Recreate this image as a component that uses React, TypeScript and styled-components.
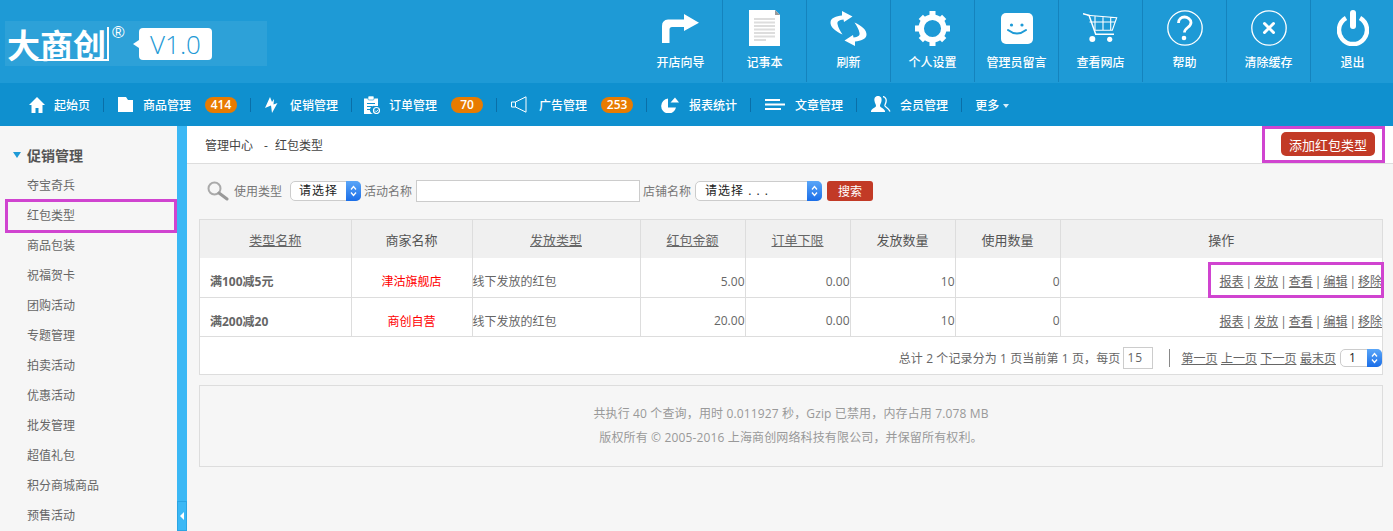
import { ReactNode } from 'react';
import styled, { createGlobalStyle } from 'styled-components';

const GlobalStyle = createGlobalStyle`
  html, body {
    margin: 0;
    height: 100%;
    overflow: hidden;
    background: #f6f6f6;
    font-family: "Open Sans", "Noto Sans CJK SC", "Liberation Sans", sans-serif;
    font-size: 12px;
  }
`;

const MARK = '#d044d0';

const refreshArc = 'M12.5 23.500C5 20 0 16 .5 11 1 7 6 5 12 4.500L12 0l10.500 5.500L14 11l-.5-2.500C9 9 7 10.500 7.500 13c.5 3 2.500 7 5 10.500z';

const toolIcons: Record<string, ReactNode> = {
  guide: (
    <svg width="37" height="29" viewBox="0 0 37 29">
      <path d="M0 29V12Q0 6 6 5.500H22V0L37 8.700 22 17V13H10Q7.500 13 7.500 15.500V29z" fill="#fff" />
    </svg>
  ),
  note: (
    <svg width="31" height="36" viewBox="0 0 31 36">
      <path d="M0 0h26l5 5v31H0z" fill="#fff" />
      <path d="M26 0l5 5h-5z" fill="#999" />
      <path d="M5 9h21M5 12.500h21M5 16h21M5 19.500h21M5 23h21M5 26.500h21" stroke="#ddd" strokeWidth="2" />
      <path d="M5 30h12" stroke="#ddd" strokeWidth="2" />
    </svg>
  ),
  refresh: (
    <svg width="37" height="35" viewBox="0 0 37 35">
      <path d={refreshArc} fill="#fff" />
      <path d={refreshArc} fill="#fff" transform="rotate(180 18.500 17.500)" />
    </svg>
  ),
  gear: (
    <svg width="35" height="35" viewBox="0 0 35 35">
      <circle cx="17.500" cy="17.500" r="11.300" fill="none" stroke="#fff" strokeWidth="5.500" />
      <g fill="#fff">
        <rect x="14.500" y="0" width="6" height="7" />
        <rect x="14.500" y="28" width="6" height="7" />
        <rect x="0" y="14.500" width="7" height="6" />
        <rect x="28" y="14.500" width="7" height="6" />
        <rect x="14.500" y="1" width="6" height="7" transform="rotate(45 17.500 17.500)" />
        <rect x="14.500" y="1" width="6" height="7" transform="rotate(135 17.500 17.500)" />
        <rect x="14.500" y="1" width="6" height="7" transform="rotate(225 17.500 17.500)" />
        <rect x="14.500" y="1" width="6" height="7" transform="rotate(315 17.500 17.500)" />
      </g>
    </svg>
  ),
  message: (
    <svg width="32" height="31" viewBox="0 0 32 31">
      <rect width="32" height="31" rx="5" fill="#fff" />
      <circle cx="10.500" cy="12" r="1.600" fill="#1e9ad6" />
      <circle cx="21" cy="12" r="1.600" fill="#1e9ad6" />
      <path d="M7 17Q16 24 25 17" fill="none" stroke="#1e9ad6" strokeWidth="2" strokeLinecap="round" />
    </svg>
  ),
  cart: (
    <svg width="35" height="30" viewBox="0 0 35 30" fill="none" stroke="#fff">
      <path d="M0 .7l6 1.600 6.700 19H31" strokeWidth="1.500" />
      <path d="M4.300 2.300l29.400 2.400-4.400 12.600H11M12 3v14M20 3.500v14M27.700 4v13M6.500 9h25.500" strokeWidth="1.100" />
      <circle cx="9.300" cy="26" r="3" fill="#fff" stroke="none" />
      <circle cx="26.700" cy="26.300" r="2.600" fill="#fff" stroke="none" />
    </svg>
  ),
  help: (
    <svg width="36" height="36" viewBox="0 0 36 36" fill="none" stroke="#fff">
      <circle cx="18" cy="18" r="17.200" strokeWidth="1.300" />
      <path d="M11.500 13c0-4 3-6 6-6s6.500 2.500 6.500 5.500c0 5-6.500 5-6.500 10" strokeWidth="2.800" />
      <circle cx="17" cy="28" r="2.300" fill="#fff" stroke="none" />
    </svg>
  ),
  clear: (
    <svg width="36" height="36" viewBox="0 0 36 36" fill="none" stroke="#fff">
      <circle cx="18" cy="18" r="17.200" strokeWidth="1.300" />
      <path d="M13.500 13.500l9 9M22.500 13.500l-9 9" strokeWidth="3" strokeLinecap="round" />
    </svg>
  ),
  power: (
    <svg width="32" height="36" viewBox="0 0 32 36" fill="none" stroke="#fff">
      <path d="M9 8a14 14 0 1 0 14 0" strokeWidth="4.500" />
      <path d="M16 3v13" strokeWidth="6" strokeLinecap="round" />
    </svg>
  ),
};

const tools = [
  { key: 'guide', label: '开店向导' },
  { key: 'note', label: '记事本' },
  { key: 'refresh', label: '刷新' },
  { key: 'gear', label: '个人设置' },
  { key: 'message', label: '管理员留言' },
  { key: 'cart', label: '查看网店' },
  { key: 'help', label: '帮助' },
  { key: 'clear', label: '清除缓存' },
  { key: 'power', label: '退出' },
];

const navIcons: Record<string, ReactNode> = {
  home: (
    <svg width="16" height="16" viewBox="0 0 16 16">
      <path d="M8 0l8 8h-2.500v8H9.500v-5h-3v5h-4V8H0z" fill="#fff" />
    </svg>
  ),
  folder: (
    <svg width="15" height="15" viewBox="0 0 15 15">
      <path d="M0 0h8l2 3h5v12H0z" fill="#fff" />
    </svg>
  ),
  bolt: (
    <svg width="13" height="16" viewBox="0 0 13 16">
      <path d="M5 0L0 11l6-2.500L7 16l5.500-10-4 1.500L9 2 7 5z" fill="#fff" />
    </svg>
  ),
  order: (
    <svg width="16" height="18" viewBox="0 0 16 18">
      <path d="M0 2.500h14V10h-3a4 4 0 0 0-2 8H0z" fill="#fff" />
      <rect x="4" y="0" width="6" height="4" rx="1" fill="#fff" stroke="#0f90cf" strokeWidth=".6" />
      <path d="M3 7.500h8M3 10.500h5M3 13.500h4" stroke="#0f90cf" strokeWidth="1.200" />
      <circle cx="12.500" cy="14.500" r="3" fill="none" stroke="#fff" strokeWidth="1.200" />
      <path d="M11 14.500l1.200 1.200 2-2" fill="none" stroke="#fff" strokeWidth="1" />
    </svg>
  ),
  ad: (
    <svg width="16" height="17" viewBox="0 0 16 17" fill="none" stroke="#fff">
      <path d="M.5 6h4L15 .8v15.400L4.500 11h-4zM4.500 6v5" strokeWidth="1" />
    </svg>
  ),
  chart: (
    <svg width="20" height="16" viewBox="0 0 20 16">
      <path d="M9 1.500a7.500 7.500 0 1 0 8 9H9z" fill="#fff" />
      <path d="M11.500 5.500L16 .5l4 5z" fill="#fff" />
    </svg>
  ),
  article: (
    <svg width="20" height="12" viewBox="0 0 20 12">
      <path d="M0 1h15M0 5.500h20M0 10h16" stroke="#fff" strokeWidth="1.800" />
    </svg>
  ),
  member: (
    <svg width="20" height="17" viewBox="0 0 20 17">
      <path d="M7 0c3 0 4 2.500 3.500 5-.3 2-1.500 3.500-1.500 5 0 1.500 4 2 5 5v1H0v-1c1-3 5-3.500 5-5 0-1.500-1.200-3-1.500-5C3 2.500 4 0 7 0z" fill="#fff" />
      <path d="M12 .5c3 .5 3.500 3.500 3 5.500-.3 1.500-1.500 3-1 4 1 1.500 3.500 2 5 5.500" fill="none" stroke="#fff" strokeWidth="1.300" />
    </svg>
  ),
};

const navItems = [
  { key: 'home', label: '起始页', width: 15 },
  { key: 'folder', label: '商品管理', width: 15, count: 414 },
  { key: 'bolt', label: '促销管理', width: 15 },
  { key: 'order', label: '订单管理', width: 13, count: 70, shift: -2 },
  { key: 'ad', label: '广告管理', width: 18, count: 253 },
  { key: 'chart', label: '报表统计', width: 18, shift: -2 },
  { key: 'article', label: '文章管理', width: 20 },
  { key: 'member', label: '会员管理', width: 19 },
];

const sideItems = [
  '夺宝奇兵', '红包类型', '商品包装', '祝福贺卡', '团购活动', '专题管理',
  '拍卖活动', '优惠活动', '批发管理', '超值礼包', '积分商城商品', '预售活动',
];

const rows = [
  { name: '满100减5元', shop: '津沽旗舰店', kind: '线下发放的红包', money: '5.00', marked: true },
  { name: '满200减20', shop: '商创自营', kind: '线下发放的红包', money: '20.00', marked: false },
];

const actions = ['报表', '发放', '查看', '编辑', '移除'];

const Stepper = () => (
  <StepperBox>
    <svg width="7" height="12" viewBox="0 0 7 12" fill="none" stroke="#fff" strokeWidth="1.300">
      <path d="M1 4.500l2.500-3 2.500 3M1 7.500l2.500 3 2.500-3" />
    </svg>
  </StepperBox>
);

const App = () => (
  <Page>
    <GlobalStyle />
    <TopBar>
      <LogoArea>
        <LogoText>
          大商创
          <LogoFrame />
        </LogoText>
        <Registered>®</Registered>
        <VersionBubble>V1.0</VersionBubble>
      </LogoArea>
      <ToolList>
        {tools.map((tool, i) => (
          <Tool key={tool.key} $first={i === 0}>
            <ToolIcon>{toolIcons[tool.key]}</ToolIcon>
            <span>{tool.label}</span>
          </Tool>
        ))}
      </ToolList>
    </TopBar>

    <NavBar>
      {navItems.map(item => (
        <NavItem key={item.key}>
          <NavIcon $width={item.width} $shift={item.shift || 0}>
            {navIcons[item.key]}
          </NavIcon>
          <span>{item.label}</span>
          {item.count && <Badge>{item.count}</Badge>}
        </NavItem>
      ))}
      <MoreItem>
        更多
        <Caret />
      </MoreItem>
    </NavBar>

    <Body>
      <Sidebar>
        <SideHeading>
          <HeadingArrow />
          促销管理
        </SideHeading>
        {sideItems.map(label => (
          <SideItem key={label} $marked={label === '红包类型'}>
            {label}
          </SideItem>
        ))}
      </Sidebar>
      <Divider>
        <CollapseButton />
      </Divider>

      <Main>
        <Breadcrumb>
          <Trail>
            管理中心<TrailDash>-</TrailDash>红包类型
          </Trail>
          <AddButton>添加红包类型</AddButton>
        </Breadcrumb>

        <Content>
          <SearchRow>
            <SearchIcon width="22" height="20" viewBox="0 0 22 20" fill="none">
              <circle cx="7.500" cy="7.500" r="6" stroke="#aaa" strokeWidth="2" />
              <path d="M12 12l8 6" stroke="#999" strokeWidth="3" strokeLinecap="round" />
            </SearchIcon>
            <SearchLabel>使用类型</SearchLabel>
            <FakeSelect $width={71} $left={8} $before={8} $after={3}>
              请选择
              <Stepper />
            </FakeSelect>
            <SearchLabel>活动名称</SearchLabel>
            <SearchInput />
            <SearchLabel>店铺名称</SearchLabel>
            <FakeSelect $width={127} $left={9} $before={4} $after={3}>
              请选择 . . .
              <Stepper />
            </FakeSelect>
            <SearchButton>搜索</SearchButton>
          </SearchRow>

          <Panel>
            <Table>
              <colgroup>
                <col width="151" />
                <col width="121" />
                <col width="168" />
                <col width="105" />
                <col width="105" />
                <col width="105" />
                <col width="105" />
                <col />
              </colgroup>
              <thead>
                <tr>
                  <HeadCell><SortLink>类型名称</SortLink></HeadCell>
                  <HeadCell>商家名称</HeadCell>
                  <HeadCell><SortLink>发放类型</SortLink></HeadCell>
                  <HeadCell><SortLink>红包金额</SortLink></HeadCell>
                  <HeadCell><SortLink>订单下限</SortLink></HeadCell>
                  <HeadCell>发放数量</HeadCell>
                  <HeadCell>使用数量</HeadCell>
                  <HeadCell>操作</HeadCell>
                </tr>
              </thead>
              <tbody>
                {rows.map(row => (
                  <tr key={row.name}>
                    <NameCell>{row.name}</NameCell>
                    <ShopCell>{row.shop}</ShopCell>
                    <Cell>{row.kind}</Cell>
                    <NumCell>{row.money}</NumCell>
                    <NumCell>0.00</NumCell>
                    <NumCell>10</NumCell>
                    <NumCell>0</NumCell>
                    <ActionCell>
                      {actions.map((action, i) => (
                        <span key={action}>
                          {i > 0 && <Pipe>|</Pipe>}
                          <ActionLink>{action}</ActionLink>
                        </span>
                      ))}
                      {row.marked && <ActionMark />}
                    </ActionCell>
                  </tr>
                ))}
              </tbody>
            </Table>
            <Pager>
              <PagerSummary>总计 2 个记录分为 1 页当前第 1 页，每页</PagerSummary>
              <PageSize>15</PageSize>
              <PagerRule />
              <PagerLinks>
                <ActionLink>第一页</ActionLink>
                <ActionLink>上一页</ActionLink>
                <ActionLink>下一页</ActionLink>
                <ActionLink>最末页</ActionLink>
              </PagerLinks>
              <FakeSelect $width={42} $left={8} $before={4} $after={0} $height={18}>
                1
                <Stepper />
              </FakeSelect>
            </Pager>
          </Panel>

          <FooterPanel>
            <div>共执行 40 个查询，用时 0.011927 秒，Gzip 已禁用，内存占用 7.078 MB</div>
            <div>版权所有 © 2005-2016 上海商创网络科技有限公司，并保留所有权利。</div>
          </FooterPanel>
        </Content>
      </Main>
    </Body>
  </Page>
);

const Page = styled.div`
  display: flex;
  flex-direction: column;
  height: 531px;
  overflow: hidden;
`;
const TopBar = styled.header`
  display: flex;
  justify-content: space-between;
  flex: none;
  height: 83px;
  background: #1e9ad6;
`;
const LogoArea = styled.div`
  position: relative;
  display: flex;
  align-items: center;
  width: 262px;
  height: 45px;
  margin: 21px 0 0 5px;
  padding-left: 2px;
  box-sizing: border-box;
  background: rgba(255, 255, 255, 0.07);
`;
const LogoText = styled.div`
  position: relative;
  width: 104px;
  color: #fff;
  font-family: "Noto Sans CJK SC", sans-serif;
  font-size: 33px;
  font-weight: 700;
  line-height: 40px;
  white-space: nowrap;
`;
const LogoFrame = styled.span`
  position: absolute;
  left: 28px;
  top: 3px;
  width: 74px;
  height: 34px;
  border-right: 2px solid #fff;
  border-bottom: 2px solid #fff;
  box-sizing: border-box;
`;
const Registered = styled.span`
  position: absolute;
  left: 107px;
  top: 3px;
  color: #fff;
  font-family: "Liberation Sans", sans-serif;
  font-size: 17px;
  line-height: 18px;
`;
const VersionBubble = styled.div`
  position: absolute;
  left: 134px;
  top: 7px;
  width: 73px;
  height: 32px;
  border-radius: 4px;
  background: #fff;
  color: #1e9ad6;
  font-size: 26px;
  font-weight: 300;
  line-height: 32px;
  text-align: center;
  &::before {
    content: '';
    position: absolute;
    left: -6px;
    top: 12px;
    border-style: solid;
    border-width: 4px 6px 4px 0;
    border-color: transparent #fff transparent transparent;
  }
`;
const ToolList = styled.nav`
  display: flex;
  margin-right: -1px;
`;
const Tool = styled.a<{ $first: boolean }>`
  display: flex;
  flex-direction: column;
  align-items: center;
  width: 84px;
  height: 82px;
  box-sizing: border-box;
  border-left: 1px solid ${props => (props.$first ? 'transparent' : '#1583bd')};
  color: #fff;
  font-weight: 500;
  line-height: 18px;
`;
const ToolIcon = styled.div`
  display: flex;
  align-items: center;
  justify-content: center;
  height: 36px;
  margin: 10px 0 8px;
`;
const NavBar = styled.nav`
  display: flex;
  align-items: center;
  flex: none;
  height: 43px;
  padding-left: 29px;
  background: #0f90cf;
  color: #fff;
  font-weight: 500;
`;
const NavItem = styled.div`
  position: relative;
  display: flex;
  align-items: center;
  margin-right: 14px;
  padding-right: 13px;
  border-right: 1px solid transparent;
  &::after {
    content: '';
    position: absolute;
    right: -1px;
    top: 2px;
    bottom: 2px;
    width: 1px;
    background: #0a6fa8;
  }
`;
const NavIcon = styled.span<{ $width: number; $shift: number }>`
  display: flex;
  align-items: center;
  width: ${props => props.$width}px;
  margin-right: 10px;
  svg {
    flex: none;
    margin-left: ${props => props.$shift}px;
  }
`;
const Badge = styled.span`
  width: 32px;
  height: 16px;
  margin-left: 14px;
  border-radius: 8px;
  background: #e87b00;
  font-size: 12px;
  font-weight: 600;
  line-height: 16px;
  text-align: center;
`;
const MoreItem = styled.div`
  display: flex;
  align-items: center;
  margin-left: -1px;
`;
const Caret = styled.span`
  margin: 2px 0 0 4px;
  border-style: solid;
  border-width: 4px 3.5px 0;
  border-color: #d8eef9 transparent transparent;
`;
const Body = styled.div`
  display: flex;
  flex: 1;
  min-height: 0;
`;
const Sidebar = styled.aside`
  flex: none;
  width: 177px;
  padding-top: 14px;
  box-sizing: border-box;
  background: #f6f6f6;
`;
const SideHeading = styled.div`
  display: flex;
  align-items: center;
  height: 30px;
  padding-left: 13px;
  color: #555;
  font-size: 14px;
  font-weight: 700;
`;
const HeadingArrow = styled.span`
  margin-right: 6px;
  border-style: solid;
  border-width: 6px 4.500px 0;
  border-color: #1e9ad6 transparent transparent;
`;
const SideItem = styled.div<{ $marked: boolean }>`
  position: relative;
  height: 30px;
  padding-left: 27px;
  color: #666;
  line-height: 31px;
  ${props =>
    props.$marked &&
    `&::after {
      content: '';
      position: absolute;
      left: 5px;
      right: 0;
      top: -1px;
      bottom: -3px;
      border: 3px solid ${MARK};
    }`}
`;
const Divider = styled.div`
  position: relative;
  flex: none;
  width: 10px;
  background: #3bb8f5;
`;
const CollapseButton = styled.span`
  position: absolute;
  left: 0;
  right: 0;
  bottom: 0;
  height: 30px;
  box-sizing: border-box;
  border: 1px solid #2aa5e4;
  &::after {
    content: '';
    position: absolute;
    left: 2px;
    top: 10px;
    border-style: solid;
    border-width: 4px 4px 4px 0;
    border-color: transparent #fff transparent transparent;
  }
`;
const Main = styled.main`
  flex: 1;
  min-width: 0;
  background: #f6f6f6;
`;
const Breadcrumb = styled.div`
  display: flex;
  align-items: center;
  justify-content: space-between;
  height: 38px;
  padding: 0 18px;
  box-sizing: border-box;
  border-bottom: 1px solid #ddd;
  background: #fff;
`;
const Trail = styled.div`
  color: #444;
`;
const TrailDash = styled.span`
  margin: 0 7px 0 11px;
`;
const AddButton = styled.button`
  position: relative;
  width: 94px;
  height: 24px;
  margin-top: -1px;
  padding: 0;
  border: 0;
  border-radius: 5px;
  background: #c23a26;
  color: #fff;
  font: inherit;
  font-size: 13px;
  &::after {
    content: '';
    position: absolute;
    left: -19px;
    right: -10px;
    top: -6px;
    bottom: -7px;
    border: 3px solid ${MARK};
  }
`;
const Content = styled.div`
  padding: 16px 10px 0 12px;
`;
const SearchRow = styled.form`
  display: flex;
  align-items: center;
  height: 22px;
  margin-bottom: 17px;
  padding-left: 8px;
  color: #777;
`;
const SearchIcon = styled.svg`
  margin-right: 5px;
`;
const SearchLabel = styled.span`
  white-space: nowrap;
`;
const FakeSelect = styled.div<{
  $width: number;
  $left: number;
  $before: number;
  $after: number;
  $height?: number;
}>`
  position: relative;
  flex: none;
  width: ${props => props.$width}px;
  height: ${props => props.$height || 20}px;
  margin: 0 ${props => props.$after}px 0 ${props => props.$before}px;
  padding-left: ${props => props.$left}px;
  box-sizing: border-box;
  border: 1px solid #ccc;
  border-radius: 5px;
  background: #fff;
  color: #222;
  letter-spacing: 1px;
  line-height: ${props => (props.$height || 20) - 2}px;
`;
const StepperBox = styled.span`
  position: absolute;
  top: -1px;
  right: -1px;
  bottom: -1px;
  display: flex;
  align-items: center;
  justify-content: center;
  width: 15px;
  border-radius: 0 5px 5px 0;
  background: linear-gradient(#5aa6f8, #1b6ee8);
`;
const SearchInput = styled.input`
  flex: none;
  width: 224px;
  height: 22px;
  margin: 0 3px 0 4px;
  padding: 0;
  box-sizing: border-box;
  border: 1px solid #ccc;
  background: #fff;
`;
const SearchButton = styled.button`
  flex: none;
  width: 46px;
  height: 20px;
  margin-left: 2px;
  padding: 0;
  border: 0;
  border-radius: 3px;
  background: #c23a26;
  color: #fff;
  font: inherit;
`;
const Panel = styled.section`
  border: 1px solid #ddd;
  background: #fff;
`;
const Table = styled.table`
  width: 100%;
  table-layout: fixed;
  border-collapse: collapse;
  color: #666;
`;
const HeadCell = styled.th`
  height: 38px;
  padding: 0;
  border-left: 1px solid #ddd;
  background: #f0f0f0;
  color: #555;
  font-size: 13px;
  font-weight: 400;
  text-align: center;
  &:first-child {
    border-left: 0;
  }
`;
const SortLink = styled.a`
  color: #666;
  text-decoration: underline;
`;
const Cell = styled.td`
  position: relative;
  height: 39px;
  padding: 8px 0 0;
  box-sizing: border-box;
  border-left: 1px solid #ddd;
  border-bottom: 1px solid #ddd;
  white-space: nowrap;
  &:first-child {
    border-left: 0;
  }
`;
const NameCell = styled(Cell)`
  padding-left: 10px;
  font-weight: 700;
`;
const ShopCell = styled(Cell)`
  color: #f00;
  text-align: center;
`;
const NumCell = styled(Cell)`
  color: #666;
  text-align: right;
`;
const ActionCell = styled(Cell)`
  text-align: right;
`;
const ActionLink = styled.a`
  color: #666;
  text-decoration: underline;
`;
const Pipe = styled.span`
  margin: 0 2px;
  color: #666;
`;
const ActionMark = styled.span`
  position: absolute;
  right: -2px;
  top: 4px;
  bottom: -1px;
  width: 176px;
  box-sizing: border-box;
  border: 3px solid ${MARK};
`;
const Pager = styled.div`
  display: flex;
  align-items: center;
  justify-content: flex-end;
  height: 37px;
  padding-top: 6px;
  box-sizing: border-box;
  color: #666;
`;
const PagerSummary = styled.span`
  letter-spacing: 0.1px;
`;
const PageSize = styled.span`
  flex: none;
  width: 30px;
  height: 22px;
  margin-left: 3px;
  padding-left: 3px;
  box-sizing: border-box;
  border: 1px solid #ccc;
  letter-spacing: 1px;
  line-height: 20px;
`;
const PagerRule = styled.span`
  width: 1px;
  height: 18px;
  margin: 0 11px 0 16px;
  background: #888;
`;
const PagerLinks = styled.div`
  display: flex;
  gap: 3.5px;
`;
const FooterPanel = styled.footer`
  display: flex;
  flex-direction: column;
  gap: 6px;
  justify-content: center;
  height: 82px;
  margin-top: 10px;
  box-sizing: border-box;
  border: 1px solid #ddd;
  color: #999;
  letter-spacing: 0.14px;
  line-height: 18px;
  text-align: center;
`;

export default App;
